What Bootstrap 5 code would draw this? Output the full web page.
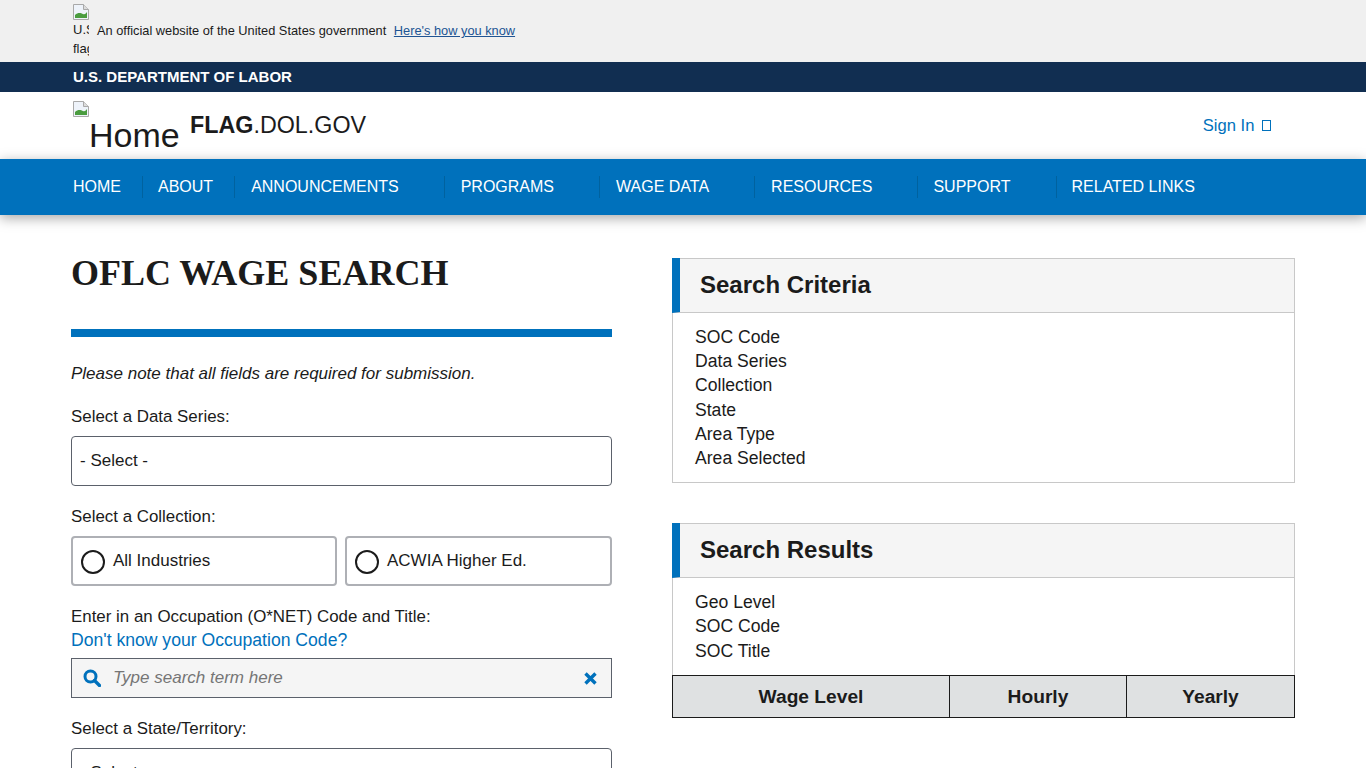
<!DOCTYPE html>
<html lang="en">
<head>
<meta charset="utf-8">
<title>OFLC Wage Search</title>
<link rel="stylesheet" href="https://cdn.jsdelivr.net/npm/bootstrap@5.3.0/dist/css/bootstrap.min.css">
<style>
html,body{height:768px;overflow:hidden}
body{font-family:"Liberation Sans",Arial,sans-serif;color:#1b1b1b;font-size:17.6px;line-height:24.2px}
.gov-strip{background:#f0f0f0;height:62px;padding:4px 0 0 73px;font-size:12.8px;line-height:18px}
.flag-box{width:16px;height:53px;overflow:hidden;display:block;font-size:13px;line-height:19px;flex:none}
.broken{display:block;width:16px;height:16px}
.gov-text{margin-left:8px;margin-top:18px;white-space:nowrap}
.gov-text a{margin-left:4px;color:#205493}
.dept-strip{background:#112e51;height:30px;padding-left:73px;color:#fff;font-weight:700;font-size:15px;line-height:30px}
.site-head{height:67px;background:#fff;padding:0 95px 0 73px;position:relative}
.logo-box{width:107px;height:58px;margin-top:9px;position:relative;flex:none}
.logo-box .broken{position:absolute;left:0;top:0}
.logo-alt{position:absolute;left:16px;top:14px;font-size:34px;line-height:40px}
.site-name{margin-left:10px;margin-top:19px;font-size:23.3px;line-height:28px}
.sign-in{color:#0071bc;text-decoration:none;font-size:16.6px;margin-top:22px}
.tofu{display:inline-block;width:9px;height:11px;border:1px solid #0071bc;margin-left:3px}
.main-bar{background:#0071bc;height:56px;padding-left:57px;box-shadow:0 3px 12px rgba(0,0,0,.35);position:relative}
.main-bar .nav-link{color:#fff;font-size:16px;line-height:22px;padding:0 21px 0 16px;border-right:1px solid #00629f}
.main-bar .nav-link.wide{padding-right:45px}
.main-bar .nav-link.nudge{padding-left:15px}
.main-bar .nav-item:last-child .nav-link{border-right:0}
.page-wrap{padding:43px 71px 0}
.left-pane{width:541px;flex:none}
.right-pane{width:623px;flex:none}
.page-title{font-family:"Liberation Serif","Times New Roman",serif;font-weight:700;font-size:36px;line-height:40px;margin:-5px 0 0;color:#1b1b1b}
.blue-rule{height:8px;background:#0071bc;margin:36px 0 25px}
.note{font-style:italic;margin-bottom:19px;line-height:24px;font-size:17px}
.fld-label{display:block;font-size:16.9px;line-height:24px;margin-bottom:7px}
.sel-box{height:50px;border:1px solid #5b616b;border-radius:4px;padding:0 8px;line-height:48px;margin-bottom:19px;background:#fff;font-size:17px}
.radio-row{margin-bottom:19px}
.radio-box{height:50px;border:2px solid #aeb0b5;border-radius:4px;padding:0 8px;display:flex;align-items:center;font-size:17px}
.radio-first{flex:0 0 266px}
.radio-second{flex:1 1 0}
.radio-dot{width:24px;height:24px;border:2px solid #1b1b1b;border-radius:50%;margin-right:8px;flex:none;position:relative;top:1px}
.occ-link{color:#0071bc;text-decoration:none;display:block;font-size:17.6px;line-height:24px;margin:-1px 0 6px}
.search-box{height:40px;border:1px solid #5b616b;background:#f5f5f5;margin-bottom:19px;padding:0 14px 0 11px;font-style:italic;color:#757575;font-size:17px}
.search-box svg{flex:none}
.panel-box{border:1px solid #c8c8c8;background:#fff}
.panel-gap{margin-bottom:40px}
.panel-head{background:#f5f5f5;height:54px;border-bottom:1px solid #c8c8c8;border-left:8px solid #0071bc;margin:-1px 0 0 -1px;padding-left:20px;font-weight:700;font-size:24px;line-height:54px;box-sizing:content-box;box-shadow:inset 0 1px 0 #c8c8c8}
.panel-body-txt{padding:12px 22px 12px;line-height:24.2px;font-size:17.6px}
.wage-grid{border:1px solid #1b1b1b;background:#dfe1e2;height:43px;font-weight:700;font-size:19.2px;margin-top:-1px}
.wage-cell{text-align:center;line-height:41px;border-right:1px solid #1b1b1b}
.wage-cell:last-child{border-right:0}
.wage-one{width:277px}
.wage-two{width:177px}
</style>
</head>
<body>
<div class="gov-strip d-flex">
  <span class="flag-box"><svg class="broken" viewBox="0 0 16 16"><path d="M.5.5h10l5 5v10H.5z" fill="#eef3fa" stroke="#a9a9a9"/><path d="M10.5.5v5h5" fill="#dcdcdc" stroke="#a9a9a9"/><path d="M2 14v-3c3-3 6-2 8-1s3-1 4-2v6z" fill="#4a9c3f"/></svg>U.S. flag</span>
  <span class="gov-text">An official website of the United States government <a href="#">Here's how you know</a></span>
</div>
<div class="dept-strip">U.S. DEPARTMENT OF LABOR</div>
<header class="site-head d-flex justify-content-between">
  <div class="d-flex">
    <div class="logo-box"><svg class="broken" viewBox="0 0 16 16"><path d="M.5.5h10l5 5v10H.5z" fill="#eef3fa" stroke="#a9a9a9"/><path d="M10.5.5v5h5" fill="#dcdcdc" stroke="#a9a9a9"/><path d="M2 14v-3c3-3 6-2 8-1s3-1 4-2v6z" fill="#4a9c3f"/></svg><span class="logo-alt">Home</span></div>
    <div class="site-name"><strong>FLAG</strong>.DOL.GOV</div>
  </div>
  <a class="sign-in" href="#">Sign In <span class="tofu"></span></a>
</header>
<nav class="main-bar d-flex align-items-center">
  <ul class="nav">
    <li class="nav-item"><a class="nav-link" href="#">HOME</a></li>
    <li class="nav-item"><a class="nav-link nudge" href="#">ABOUT</a></li>
    <li class="nav-item"><a class="nav-link wide" href="#">ANNOUNCEMENTS</a></li>
    <li class="nav-item"><a class="nav-link wide" href="#">PROGRAMS</a></li>
    <li class="nav-item"><a class="nav-link wide" href="#">WAGE DATA</a></li>
    <li class="nav-item"><a class="nav-link wide" href="#">RESOURCES</a></li>
    <li class="nav-item"><a class="nav-link wide nudge" href="#">SUPPORT</a></li>
    <li class="nav-item"><a class="nav-link nudge" href="#">RELATED LINKS</a></li>
  </ul>
</nav>
<main class="page-wrap d-flex gap-0 justify-content-between">
  <section class="left-pane">
    <h1 class="page-title">OFLC WAGE SEARCH</h1>
    <div class="blue-rule"></div>
    <p class="note">Please note that all fields are required for submission.</p>
    <label class="fld-label">Select a Data Series:</label>
    <div class="sel-box">- Select -</div>
    <label class="fld-label">Select a Collection:</label>
    <div class="d-flex gap-2 radio-row">
      <div class="radio-box radio-first"><span class="radio-dot"></span>All Industries</div>
      <div class="radio-box radio-second"><span class="radio-dot"></span>ACWIA Higher Ed.</div>
    </div>
    <label class="fld-label mb-0">Enter in an Occupation (O*NET) Code and Title:</label>
    <a class="occ-link" href="#">Don't know your Occupation Code?</a>
    <div class="search-box d-flex align-items-center">
      <svg width="18" height="18" viewBox="0 0 18 18" class="me-2"><circle cx="7.5" cy="7.5" r="5.5" fill="none" stroke="#0071bc" stroke-width="3"/><path d="M11.5 11.5l5 5" stroke="#0071bc" stroke-width="3.4" stroke-linecap="round"/></svg>
      <span class="flex-grow-1 ps-1">Type search term here</span>
      <svg width="13" height="13" viewBox="0 0 13 13"><path d="M1.5 1.5l10 10M11.5 1.5l-10 10" stroke="#0071bc" stroke-width="3.4"/></svg>
    </div>
    <label class="fld-label">Select a State/Territory:</label>
    <div class="sel-box">- Select -</div>
  </section>
  <section class="right-pane">
    <div class="panel-box panel-gap">
      <div class="panel-head">Search Criteria</div>
      <div class="panel-body-txt">SOC Code<br>Data Series<br>Collection<br>State<br>Area Type<br>Area Selected</div>
    </div>
    <div class="panel-box">
      <div class="panel-head">Search Results</div>
      <div class="panel-body-txt">Geo Level<br>SOC Code<br>SOC Title</div>
    </div>
    <div class="wage-grid d-flex">
      <div class="wage-cell wage-one">Wage Level</div>
      <div class="wage-cell wage-two">Hourly</div>
      <div class="wage-cell flex-grow-1">Yearly</div>
    </div>
  </section>
</main>
<script src="https://cdn.jsdelivr.net/npm/bootstrap@5.3.0/dist/js/bootstrap.bundle.min.js"></script>
</body>
</html>
